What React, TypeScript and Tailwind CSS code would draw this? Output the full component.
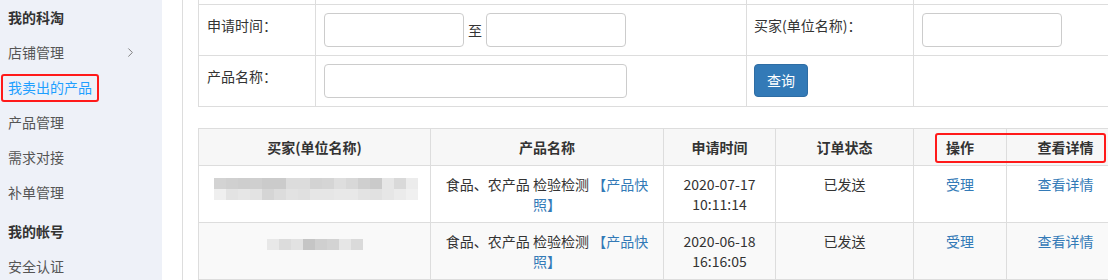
import { ChevronRight } from "lucide-react";

const font = { fontFamily: '"Noto Sans CJK SC", "Liberation Sans", sans-serif' };

const mosaicA = [
  ["#d3d3d3", "#d0d0d0", "#cecece", "#cfcfcf", "#cbcbcb", "#cbcbcb", "#dcdcdc", "#dcdcdc", "#d3d3d3", "#d5d5d5", "#dedede", "#d8d8d8", "#cfcfcf", "#cacaca", "#e6e6e6", "#d9d9d9", "#ececec"],
  ["#efefef", "#e3e3e3", "#e6e6e6", "#e3e3e3", "#d5d5d5", "#dcdcdc", "#e2e2e2", "#e0e0e0", "#e6e6e6", "#e6e6e6", "#e8e8e8", "#e8e8e8", "#e3e3e3", "#e1e1e1", "#e6e6e6", "#ebebeb", "#f0f0f0"],
];
const mosaicB = [["#e8e8e8", "#dcdcdc", "#e2e2e2", "#c5c5c5", "#cfcfcf", "#d3d3d3", "#e6e6e6", "#dadada"]];

const Mosaic = ({ rows }: { rows: string[][] }) => (
  <div className="inline-flex flex-col">
    {rows.map((r, i) => (
      <div key={i} className="flex">
        {r.map((c, j) => (
          <div key={j} className="w-[12px] h-[11px]" style={{ backgroundColor: c }} />
        ))}
      </div>
    ))}
  </div>
);

const Sidebar = () => (
  <div className="w-[162px] shrink-0 h-full bg-[#eef1f8] text-[14px]">
    <div className="h-[35px] flex items-center pl-2 font-bold text-[#333]">我的科淘</div>
    <div className="h-[35px] flex items-center pl-2 pr-[24px] justify-between text-[#555]">
      <span>店铺管理</span>
      <ChevronRight size={15} strokeWidth={1.5} className="text-[#777]" />
    </div>
    <div className="h-[35px] flex items-center pl-[1px]">
      <span className="h-[28px] flex items-center border-2 border-[#ff1a1a] rounded-[3px] px-[5px] text-[#1e9fff]">
        我卖出的产品
      </span>
    </div>
    <div className="h-[35px] flex items-center pl-2 text-[#555]">产品管理</div>
    <div className="h-[35px] flex items-center pl-2 text-[#555]">需求对接</div>
    <div className="h-[35px] flex items-center pl-2 text-[#555]">补单管理</div>
    <div className="h-[35px] mt-[4px] flex items-center pl-2 font-bold text-[#333]">我的帐号</div>
    <div className="h-[35px] flex items-center pl-2 text-[#555]">安全认证</div>
  </div>
);

const Input = ({ w }: { w: string }) => (
  <div className={`${w} h-[34px] border border-[#ccc] rounded-[4px] bg-white`} />
);

const FormTable = () => (
  <div className="w-[926px] -mt-[41px] border-l border-t border-[#ddd] text-[14px] text-[#333]">
    <div className="flex h-[45px] border-b border-[#ddd]">
      <div className="w-[117px] border-r border-[#ddd]" />
      <div className="w-[431px] border-r border-[#ddd]" />
      <div className="w-[167px] border-r border-[#ddd]" />
      <div className="flex-1" />
    </div>
    <div className="flex h-[51px] border-b border-[#ddd]">
      <div className="w-[117px] border-r border-[#ddd] pl-[8px] pt-[10px] leading-[20px]">申请时间：</div>
      <div className="w-[431px] border-r border-[#ddd] pl-[8px] pt-[8px] flex items-start">
        <Input w="w-[140px]" />
        <span className="w-[22px] h-[34px] flex items-center justify-center">至</span>
        <Input w="w-[140px]" />
      </div>
      <div className="w-[167px] border-r border-[#ddd] pl-[7px] pt-[10px] leading-[20px]">买家(单位名称)：</div>
      <div className="flex-1 pl-[8px] pt-[8px]">
        <Input w="w-[140px]" />
      </div>
    </div>
    <div className="flex h-[51px] border-b border-[#ddd]">
      <div className="w-[117px] border-r border-[#ddd] pl-[8px] pt-[10px] leading-[20px]">产品名称：</div>
      <div className="w-[431px] border-r border-[#ddd] pl-[8px] pt-[8px]">
        <Input w="w-[303px]" />
      </div>
      <div className="w-[167px] border-r border-[#ddd] pl-[7px] pt-[8px]">
        <button className="w-[54px] h-[33px] rounded-[4px] bg-[#337ab7] border border-[#2e6da4] text-white text-[14px]">查询</button>
      </div>
      <div className="flex-1" />
    </div>
  </div>
);

const rows = [
  { date: "2020-07-17", time: "10:11:14", mosaic: mosaicA, bg: "bg-white" },
  { date: "2020-06-18", time: "16:16:05", mosaic: mosaicB, bg: "bg-[#f9f9f9]" },
];

const DataTable = () => (
  <div className="relative w-[926px] mt-[21px] border-l border-t border-[#ddd] text-[14px] text-[#333] leading-[20px]">
    <div className="flex h-[37px] border-b border-[#ddd] bg-[#f7f7f7] font-bold">
      <div className="w-[232px] border-r border-[#ddd] flex items-center justify-center">买家(单位名称)</div>
      <div className="w-[233px] border-r border-[#ddd] flex items-center justify-center">产品名称</div>
      <div className="w-[112px] border-r border-[#ddd] flex items-center justify-center">申请时间</div>
      <div className="w-[138px] border-r border-[#ddd] flex items-center justify-center">订单状态</div>
      <div className="w-[93px] border-r border-[#ddd] flex items-center justify-center">操作</div>
      <div className="flex-1 flex items-center justify-center">查看详情</div>
    </div>
    {rows.map((r, i) => (
      <div key={i} className={`flex h-[57px] border-b border-[#ddd] ${r.bg}`}>
        <div className="w-[232px] border-r border-[#ddd] flex justify-center pt-[7px]">
          <div className={i === 0 ? "pl-[2px]" : "pt-[4px]"}>
            <Mosaic rows={r.mosaic} />
          </div>
        </div>
        <div className="w-[233px] border-r border-[#ddd] px-[8px] pt-[8px] text-center">
          食品、农产品 检验检测 <span className="text-[#337ab7]">【产品快照】</span>
        </div>
        <div className="w-[112px] border-r border-[#ddd] pt-[8px] text-center">
          {r.date}
          <br />
          {r.time}
        </div>
        <div className="w-[138px] border-r border-[#ddd] pt-[8px] text-center">已发送</div>
        <div className="w-[93px] border-r border-[#ddd] pt-[8px] text-center text-[#337ab7]">受理</div>
        <div className="flex-1 pt-[8px] text-center text-[#337ab7]">查看详情</div>
      </div>
    ))}
    <div className="absolute left-[736px] top-[4px] w-[171px] h-[30px] border-2 border-[#ff1a1a] rounded-[3px]" />
  </div>
);

export default function App() {
  return (
    <div className="w-[1108px] h-[280px] overflow-hidden flex bg-white" style={font}>
      <Sidebar />
      <div className="ml-[20px] border-l border-[#ddd] pl-[15px] flex-1 overflow-hidden">
        <FormTable />
        <DataTable />
      </div>
    </div>
  );
}
